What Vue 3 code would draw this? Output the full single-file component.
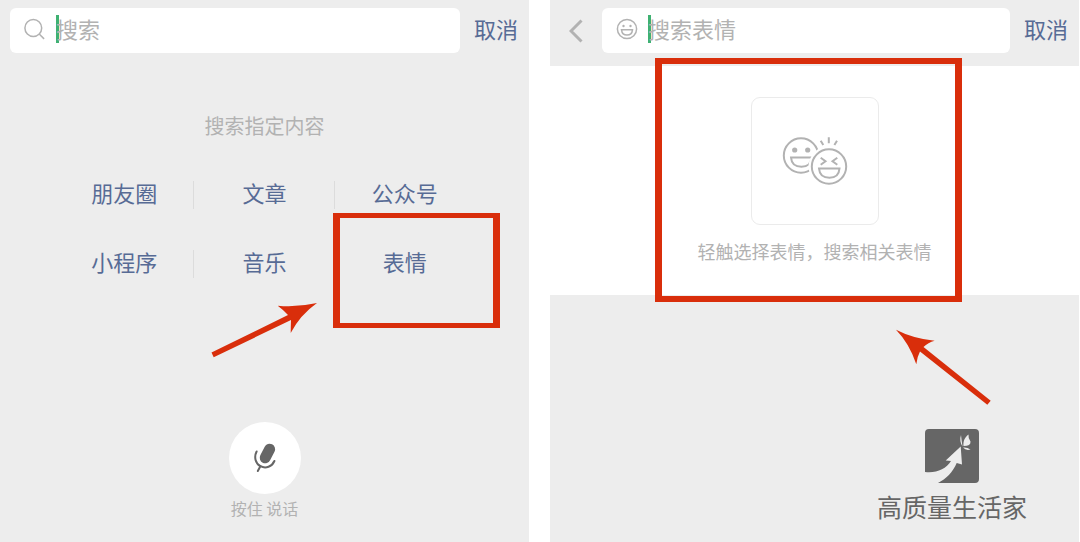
<script setup>
import { ref } from 'vue'

const query = ref('')
const stickerQuery = ref('')
const categories = ['朋友圈', '文章', '公众号', '小程序', '音乐', '表情']
</script>

<template>
  <main class="board">
    <section class="panel" aria-label="搜索">
      <header class="bar">
        <label class="field">
          <svg class="field-icon" viewBox="0 0 22 22" aria-hidden="true">
            <circle cx="9.3" cy="10" r="8.4" />
            <path d="M15.2 16l4.9 4.9" />
          </svg>
          <span class="caret"></span>
          <input v-model="query" type="text" placeholder="搜索" aria-label="搜索" />
        </label>
        <button class="cancel" type="button">取消</button>
      </header>

      <h2 class="hint">搜索指定内容</h2>
      <nav class="categories">
        <div v-for="name in categories" :key="name" class="cell">
          <a href="#">{{ name }}</a>
          <span v-if="name === '表情'" class="frame frame-cell"></span>
        </div>
      </nav>

      <button class="voice" type="button">
        <svg class="mic" viewBox="0 0 72 72" aria-hidden="true">
          <path class="mic-body" d="M40.6 27.2L36.2 35.8" />
          <path class="mic-line" d="M27.6 29.5C24.8 35 26.4 41.6 31.4 44.2C36.8 47 43 44.6 45.4 39" />
          <path class="mic-line" d="M31.4 44.2L28.8 49" />
        </svg>
        <span>按住 说话</span>
      </button>

      <svg class="arrow arrow-left" viewBox="0 0 108 56" aria-hidden="true">
        <path d="M0.5 50.5L77 13Q72 7.5 66.7 3.7Q86 5.5 106 1Q89 13 79.7 31Q79.8 24 80 18L2.7 55.3Z" />
      </svg>
    </section>

    <section class="panel" aria-label="搜索表情">
      <header class="bar bar-nested">
        <button class="back" type="button" aria-label="返回">
          <svg viewBox="0 0 14 24" aria-hidden="true"><path d="M12.5 1.5L2 12l10.5 10.5" /></svg>
        </button>
        <label class="field">
          <svg class="field-icon" viewBox="0 0 22 22" aria-hidden="true">
            <circle cx="11" cy="11" r="9.6" />
            <circle class="dot" cx="7.5" cy="8" r="1.2" />
            <circle class="dot" cx="14.5" cy="8" r="1.2" />
            <path d="M5.5 11.800h11c-.4 3.500-2.500 5.200-5.500 5.200s-5.100-1.700-5.500-5.200z" />
          </svg>
          <span class="caret"></span>
          <input v-model="stickerQuery" type="text" placeholder="搜索表情" aria-label="搜索表情" />
        </label>
        <button class="cancel" type="button">取消</button>
      </header>

      <div class="picker">
        <button class="tile" type="button" aria-label="选择表情">
          <svg viewBox="0 0 128 128" aria-hidden="true">
            <circle cx="50" cy="58.5" r="17.2" />
            <circle class="dot" cx="43.7" cy="53" r="2.6" />
            <circle class="dot" cx="56.7" cy="53" r="2.6" />
            <path d="M40 60.500h20.500c-.5 6.500-4.500 9.300-10 9.300s-10-2.800-10.500-9.300z" />
            <circle class="cutout" cx="78" cy="69.5" r="20.5" />
            <circle cx="78" cy="69.5" r="17.2" />
            <path d="M69.700 60.800l4.800 3.500-4.800 3.500M86.300 60.800l-4.800 3.500 4.800 3.500" />
            <path d="M68 71.500h20.500c-.5 6.500-4.500 9.300-10 9.300s-10-2.800-10.500-9.300z" />
            <path d="M69.700 43.700l2.600 4.300M77.800 40.300v6M86 43.700l-2.600 4.300" />
          </svg>
        </button>
        <p>轻触选择表情，搜索相关表情</p>
        <span class="frame frame-picker"></span>
      </div>

      <footer class="brand">
        <svg viewBox="0 0 54 54" aria-hidden="true">
          <path class="brand-tile" d="M4 0H50Q54 0 54 4V50Q54 54 50 54H13C21 50 28 43 31.700 34L37 35.500L35.700 17.500L20.700 31.500L26 32C21 40 11 44.500 0 43V4Q0 0 4 0Z" />
          <path class="brand-wing" d="M36 6Q34 12 37.500 17.500Q36.500 11 36 6ZM38.500 17C38 12 40 8 43.500 5.500Q43 9 45.500 12.500Q46 17 38.500 17ZM38 18.500Q42 18 45.500 20.500Q41 22 38 18.500Z" />
        </svg>
        <strong>高质量生活家</strong>
      </footer>

      <svg class="arrow arrow-right" viewBox="0 0 96 76" aria-hidden="true">
        <path d="M1 0.700Q18 9.500 39.700 11.700Q33 13.500 28.500 18L95.700 71.700L92.300 75.700L25 22.500Q22 28 21.300 35.300Q14.500 14.500 1 0.700Z" />
      </svg>
    </section>
  </main>
</template>

<style>
body {
  background: #fff;
}
</style>

<style scoped>
.board {
  display: grid;
  grid-template-columns: 1fr 1fr;
  gap: 21px;
  min-height: 100vh;
  padding-right: 1px;
  box-sizing: border-box;
  font-family: "Noto Sans CJK SC", sans-serif;
  font-weight: 400;
  color: #b2b2b2;
}

.panel {
  position: relative;
  display: flex;
  flex-direction: column;
  background: #ededed;
}

button {
  padding: 0;
  border: 0;
  background: none;
  font: inherit;
  color: inherit;
  cursor: pointer;
}

svg {
  display: block;
  fill: none;
  stroke: #b2b2b2;
  stroke-width: 2;
}

.bar {
  display: flex;
  align-items: center;
  padding: 8px 11px 13px 10px;
}

.bar-nested {
  padding-left: 0;
}

.field {
  flex: 1;
  display: flex;
  align-items: center;
  min-width: 0;
  height: 45px;
  padding: 0 14px 3px;
  box-sizing: border-box;
  border-radius: 6px;
  background: #fff;
}

.field-icon {
  flex: none;
  width: 22px;
  height: 22px;
  margin-right: 10px;
  stroke-width: 1.5;
}

.dot {
  fill: #b2b2b2;
  stroke: none;
}

.caret {
  flex: none;
  width: 3px;
  height: 28px;
  margin-right: -3px;
  background: #3fb172;
}

input {
  flex: 1;
  min-width: 0;
  padding: 0 0 3px;
  border: 0;
  outline: 0;
  background: none;
  font: inherit;
  font-size: 22px;
  line-height: 32px;
  color: #333;
}

input::placeholder {
  color: #b2b2b2;
  opacity: 1;
}

.cancel {
  margin-left: 14px;
  padding-bottom: 6px;
  font-size: 22px;
  line-height: 32px;
  color: #576b95;
}

.back {
  display: flex;
  justify-content: center;
  width: 52px;
}

.back svg {
  width: 14px;
  height: 24px;
  stroke-width: 3;
}

.hint {
  margin: 46px 0 20px;
  font-size: 20px;
  line-height: 28px;
  font-weight: 400;
  text-align: center;
}

.categories {
  display: grid;
  grid-template-columns: repeat(3, 1fr);
  margin: 0 54px;
}

.cell {
  position: relative;
  display: flex;
  align-items: center;
  justify-content: center;
  height: 69px;
}

.cell:not(:nth-child(3n))::after {
  content: "";
  position: absolute;
  right: 0;
  width: 1px;
  height: 28px;
  background: #dcdcdc;
}

.cell a {
  padding-bottom: 6px;
  font-size: 22px;
  line-height: 32px;
  color: #576b95;
  text-decoration: none;
}

.frame {
  position: absolute;
  border: 6px solid #d92e0b;
  border-width: 6px 7px;
  box-sizing: border-box;
  pointer-events: none;
}

.frame-cell {
  top: -16px;
  right: -25px;
  bottom: -30px;
  left: -2px;
  border-width: 5px 7px;
}

.frame-picker {
  top: -8px;
  right: 117px;
  bottom: -7px;
  left: 105px;
}

.voice {
  align-self: center;
  display: flex;
  flex-direction: column;
  align-items: center;
  gap: 4px;
  margin: 124px 0 24px;
  font-size: 16px;
  line-height: 20px;
}

.mic {
  width: 72px;
  height: 72px;
  border-radius: 50%;
  background: #fff;
  stroke: #666;
  stroke-linecap: round;
}

.mic-body {
  stroke-width: 11;
}

.mic-line {
  stroke-width: 2;
}

.picker {
  position: relative;
  display: flex;
  flex-direction: column;
  align-items: center;
  gap: 12px;
  padding: 31px 0 30px;
  background: #fff;
}

.tile {
  width: 128px;
  height: 128px;
  box-sizing: border-box;
  border: 1px solid #ebebeb;
  border-radius: 9px;
}

.tile svg {
  width: 128px;
  height: 128px;
  margin: -1px;
}

.tile .cutout {
  fill: #fff;
  stroke: none;
}

.picker p {
  margin: 0;
  font-size: 18px;
  line-height: 28px;
}

.brand {
  align-self: flex-end;
  display: flex;
  flex-direction: column;
  align-items: center;
  gap: 8px;
  margin: 134px 52px 20px 0;
}

.brand svg {
  width: 54px;
  height: 54px;
  stroke: none;
}

.brand-tile {
  fill: #666;
}

.brand-wing {
  fill: #ededed;
}

.brand strong {
  font-family: "AR PL UKai CN", KaiTi, "Noto Sans CJK SC", serif;
  font-size: 25px;
  line-height: 30px;
  font-weight: 400;
  color: #666;
}

.arrow {
  position: absolute;
  pointer-events: none;
  fill: #d92e0b;
  stroke: none;
}

.arrow-left {
  top: 302px;
  left: 211px;
  width: 108px;
  height: 56px;
}

.arrow-right {
  top: 329px;
  right: 88px;
  width: 96px;
  height: 76px;
}
</style>
